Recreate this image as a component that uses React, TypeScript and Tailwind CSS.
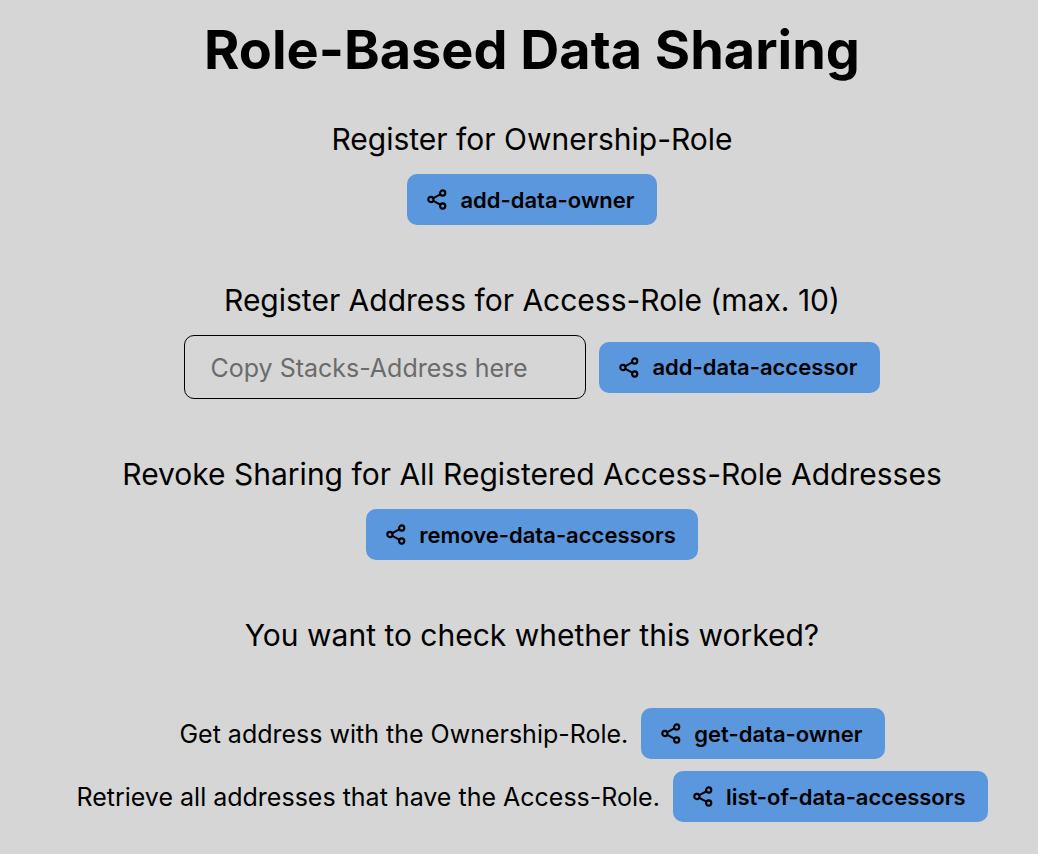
import type { ReactNode } from 'react';

function ShareIcon() {
  return (
    <svg className="h-[21px] w-5 shrink-0" viewBox="0 0 20 21" fill="none" stroke="currentColor" strokeWidth="2.1" aria-hidden="true">
      <circle cx="3.9" cy="10.5" r="2.6" />
      <circle cx="15.7" cy="4" r="2.6" />
      <circle cx="15.7" cy="17" r="2.6" />
      <path d="M6.3 9.2l7-3.9M6.3 11.8l7 3.9" />
    </svg>
  );
}

function ActionButton({ children }: { children: ReactNode }) {
  return (
    <button type="button" className="flex h-[51px] shrink-0 items-center gap-[13px] rounded-[10px] bg-[#5a97dc] pr-[22px] pl-5 text-[22px] leading-8 font-semibold whitespace-nowrap">
      <ShareIcon />
      {children}
    </button>
  );
}

const heading = 'text-[30px] leading-[38px]';

export default function App() {
  return (
    <main className="flex min-h-screen flex-col items-center bg-[#d6d6d6] pt-4 pb-8 pl-[26px] font-['Inter',sans-serif] text-black">
      <h1 className="text-[54px] leading-[68px] font-bold">Role-Based Data Sharing</h1>

      <section className="mt-9 flex flex-col items-center gap-4">
        <h2 className={heading}>Register for Ownership-Role</h2>
        <ActionButton>add-data-owner</ActionButton>
      </section>

      <section className="mt-14 flex flex-col items-center gap-4">
        <h2 className={heading}>
          <label htmlFor="address">Register Address for Access-Role (max. 10)</label>
        </h2>
        <div className="flex items-center gap-[13px]">
          <input id="address" type="text" placeholder="Copy Stacks-Address here" className="h-16 w-[402px] rounded-[10px] border border-black bg-transparent px-[25px] pt-0.5 text-[25px] placeholder:text-[#6b6b6b]" />
          <ActionButton>add-data-accessor</ActionButton>
        </div>
      </section>

      <section className="mt-14 flex flex-col items-center gap-4">
        <h2 className={heading}>Revoke Sharing for All Registered Access-Role Addresses</h2>
        <ActionButton>remove-data-accessors</ActionButton>
      </section>

      <section className="mt-14 flex flex-col items-center">
        <h2 className={heading}>You want to check whether this worked?</h2>
        <div className="mt-[54px] flex flex-col items-center gap-3 text-[25px] leading-8">
          <div className="flex items-center gap-[13px]">
            <p>Get address with the Ownership-Role.</p>
            <ActionButton>get-data-owner</ActionButton>
          </div>
          <div className="flex items-center gap-[13px]">
            <p>Retrieve all addresses that have the Access-Role.</p>
            <ActionButton>list-of-data-accessors</ActionButton>
          </div>
        </div>
      </section>
    </main>
  );
}
